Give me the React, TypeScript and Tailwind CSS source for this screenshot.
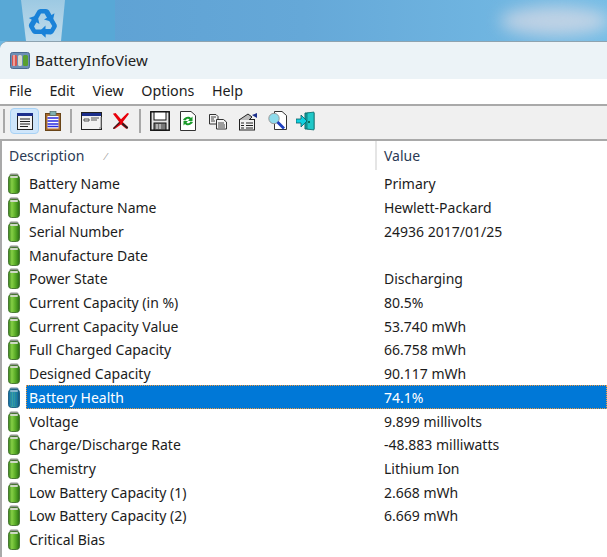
import React from "react";

function Battery({ selected }: { selected?: boolean }) {
  const id = selected ? "bs" : "bn";
  return (
    <svg width="12" height="21" viewBox="0 0 12 21" className="shrink-0">
      <defs>
        <linearGradient id={id} x1="0" x2="1" y1="0" y2="0">
          <stop offset="0" stopColor={selected ? "#16628a" : "#35801a"} />
          <stop offset="0.3" stopColor={selected ? "#3da5a0" : "#86cf45"} />
          <stop offset="0.65" stopColor={selected ? "#2a8f9a" : "#55a824"} />
          <stop offset="1" stopColor={selected ? "#124f78" : "#2a6d14"} />
        </linearGradient>
      </defs>
      <rect x="1.5" y="0.5" width="9" height="4" rx="1.5" fill={selected ? "#5f8aa5" : "#8f958c"} />
      <rect x="0.5" y="2.5" width="11" height="18" rx="3" fill={`url(#${id})`} stroke={selected ? "#175a80" : "#3f6f2a"} strokeWidth="0.9" />
      <rect x="2" y="3" width="8" height="2" rx="1" fill={selected ? "#86b4cc" : "#cfd8c6"} />
      {selected &&
        [6, 8, 10, 12, 14, 16, 18].map((y) => (
          <line key={y} x1="1" x2="11" y1={y} y2={y} stroke="#0b6fc8" strokeWidth="0.8" strokeDasharray="1 1" />
        ))}
    </svg>
  );
}

const ARM = "M11 20 L16.500 10.500 Q17.500 9 19.500 9 H25 Q27 9 28 10.500 L30.500 15 L33.500 13.300 L31.500 22 L23 19.500 L26 17.800 L23.500 13.500 H20 L15.500 21.500 Z";

function RecycleBin() {
  return (
    <svg width="46" height="41" viewBox="0 0 46 41">
      <defs>
        <linearGradient id="binFill" x1="0" x2="0" y1="0" y2="1">
          <stop offset="0" stopColor="#a9cfe5" />
          <stop offset="1" stopColor="#d3e5ef" />
        </linearGradient>
      </defs>
      <path d="M0 0H44L40 41H5Z" fill="url(#binFill)" opacity="0.85" />
      <g fill="#1a82d8">
        <path d={ARM} />
        <path d={ARM} transform="rotate(120 22 23)" />
        <path d={ARM} transform="rotate(240 22 23)" />
      </g>
    </svg>
  );
}

function AppIcon() {
  return (
    <svg width="20" height="18" viewBox="0 0 20 18">
      <rect x="0.5" y="0.5" width="19" height="16" rx="2" fill="#6d8fb5" stroke="#4a6a8f" />
      <rect x="2" y="3" width="5" height="11" rx="1.5" fill="#d8554f" />
      <rect x="3" y="3" width="2" height="11" fill="#eca09a" />
      <rect x="8" y="3" width="4" height="11" rx="1.5" fill="#d8d8cc" />
      <rect x="13" y="3" width="5" height="11" rx="1.5" fill="#58a030" />
    </svg>
  );
}

const I = ({ children }: { children: React.ReactNode }) => (
  <svg width="20" height="20" viewBox="0 0 20 20" className="shrink-0">
    {children}
  </svg>
);

const Doc1 = () => (
  <svg width="16" height="17" viewBox="0 0 16 17" className="shrink-0">
    <rect x="0.5" y="0.5" width="15" height="16" fill="#f3f3f3" stroke="#222" />
    <rect x="0" y="0" width="16" height="3" fill="#1c2f8c" />
    <path d="M3 6h10M3 8.500h10M3 11h10M3 13.500h8" stroke="#222" strokeWidth="1.2" />
  </svg>
);
const Clip = () => (
  <svg width="16" height="20" viewBox="0 0 16 20" className="shrink-0">
    <rect x="0.5" y="2.5" width="15" height="17" fill="#a8682c" stroke="#6a4518" />
    <rect x="2.500" y="5" width="11" height="12.500" fill="#fff" />
    <path d="M2.500 7h11M2.500 10h11M2.500 13h11M2.500 15.500h11" stroke="#2a2adf" strokeWidth="1.6" />
    <rect x="5" y="0.5" width="6" height="4" fill="#7fb0b0" stroke="#4a6a6a" strokeWidth="0.7" />
  </svg>
);
const Win = () => (
  <svg width="21" height="18" viewBox="0 0 21 18" className="shrink-0">
    <rect x="0.5" y="0.5" width="20" height="17" fill="#f2f2f2" stroke="#222" />
    <rect x="1" y="1" width="19" height="3" fill="#1c2f8c" />
    <path d="M3 7h5v2H3zM10 6h8M10 8h6" stroke="#555" strokeWidth="1" fill="none" />
    <path d="M18 16h2V5" stroke="#888" fill="none" />
  </svg>
);
const XIcon = () => (
  <svg width="18" height="18" viewBox="0 0 20 20" className="shrink-0">
    <path d="M1 2l3-1 6 7 7-7 2 1-7 9 6 6-2 2-6-5-7 5-2-1 7-7z" fill="#e8000b" />
    <path d="M1 18l7-7 1 1-7 7z" fill="#222" />
    <path d="M12 12l6 5-1 2-6-5z" fill="#222" />
  </svg>
);
const Save = () => (
  <I>
    <rect x="0.8" y="0.8" width="18.400" height="18.400" fill="#e6e6e6" stroke="#111" strokeWidth="1.500" />
    <rect x="4" y="1" width="12" height="8" fill="#fff" stroke="#111" />
    <rect x="4" y="12" width="12" height="7" fill="#777" stroke="#111" />
    <path d="M7 13v5M10 13v5" stroke="#eee" />
  </I>
);
const Refresh = () => (
  <svg width="16" height="20" viewBox="0 0 16 20" className="shrink-0">
    <path d="M0.500 0.500H11L15.500 4.500V19.500H0.500Z" fill="#fff" stroke="#333" />
    <path d="M3 9c1-3 6-4.500 8-2l1.500-1.500V10H8l1.500-1.500c-1-1.500-3-1-4 1z" fill="#1a9a2a" />
    <path d="M13 11c-1 3-6 4.500-8 2l-1.500 1.500V10H8l-1.500 1.500c1 1.500 3 1 4-1z" fill="#1a9a2a" />
  </svg>
);
const Copy = () => (
  <I>
    <path d="M1.500 3.500H8L10 5.500V13H1.500Z" fill="#f5f5f5" stroke="#333" />
    <path d="M8.500 8.500H15.500L18.500 11V18H8.500Z" fill="#f5f5f5" stroke="#333" />
    <path d="M3 6h5M3 8h3M3 10h4M10 12h6M10 14h7M10 16h7" stroke="#444" />
  </I>
);
const Props = () => (
  <I>
    <rect x="1.500" y="8.500" width="15" height="10.500" fill="#f2f2f2" stroke="#222" />
    <path d="M1 9l9-6 4 3-3 3" fill="#bbb" stroke="#222" />
    <path d="M3 12h3M8 12h7M3 14.500h3M8 14.500h7M3 17h3M8 17h7" stroke="#222" />
    <path d="M14 4l5-2v5z" fill="#1c2f8c" />
  </I>
);
const Find = () => (
  <svg width="19" height="20" viewBox="0 0 19 20" className="shrink-0">
    <path d="M6.500 0.500H14L18.500 4.500V18.500H6.500Z" fill="#fff" stroke="#333" />
    <circle cx="6" cy="7.500" r="5.200" fill="#8fdcec" stroke="#999" />
    <path d="M9.500 11L16 17.500" stroke="#1c3fc0" strokeWidth="2.800" />
  </svg>
);
const Exit = () => (
  <I>
    <path d="M9 2h9v16h-9z" fill="#14a6a6" stroke="#0a6a6a" />
    <path d="M11 2l7-1v18l-7-1z" fill="#20c8c8" stroke="#0a6a6a" strokeWidth="0.7" />
    <circle cx="13" cy="11" r="1" fill="#053" />
    <path d="M0 8h5V4l6 6-6 6v-4H0z" fill="#0fd0e0" stroke="#0a5a60" strokeWidth="0.8" />
  </I>
);

const Sep = () => <div className="w-[2px] h-[24px] bg-[#a8a8a8] shrink-0" />;

const rows: [string, string][] = [
  ["Battery Name", "Primary"],
  ["Manufacture Name", "Hewlett-Packard"],
  ["Serial Number", "24936 2017/01/25"],
  ["Manufacture Date", ""],
  ["Power State", "Discharging"],
  ["Current Capacity (in %)", "80.5%"],
  ["Current Capacity Value", "53.740 mWh"],
  ["Full Charged Capacity", "66.758 mWh"],
  ["Designed Capacity", "90.117 mWh"],
  ["Battery Health", "74.1%"],
  ["Voltage", "9.899 millivolts"],
  ["Charge/Discharge Rate", "-48.883 milliwatts"],
  ["Chemistry", "Lithium Ion"],
  ["Low Battery Capacity (1)", "2.668 mWh"],
  ["Low Battery Capacity (2)", "6.669 mWh"],
  ["Critical Bias", ""],
];

export default function App() {
  return (
    <div className="w-[607px] h-[557px] overflow-hidden flex flex-col bg-[#6fb8e2] text-[14px] text-[#1c1c1c] font-['Noto_Sans','Open_Sans',sans-serif]">
      <div className="h-[41px] shrink-0 flex bg-gradient-to-r from-[#5c9fd2] via-[#65a8d8] to-[#76bde6] overflow-hidden relative">
        <div className="w-[115px] h-full pl-[21px] bg-[#58a8d6] shrink-0">
          <RecycleBin />
        </div>
        <div className="absolute left-[500px] top-[6px] w-[110px] h-[30px] rounded-[50%] bg-[#f2e2e6]/60 blur-[8px]" />
      </div>
      <div className="flex-1 min-h-0 flex flex-col rounded-tl-[8px] overflow-hidden bg-white border-t border-[#8ea3b0]">
        <div className="h-[37px] shrink-0 bg-[#ecf3f7] flex items-center pl-[10px] gap-[5px]">
          <AppIcon />
          <span className="text-[15px] text-[#222]">BatteryInfoView</span>
        </div>
        <div className="h-[25px] shrink-0 bg-white flex items-center pl-[9px] pb-[2px] gap-[17.5px] text-[14.3px]">
          <span>File</span>
          <span>Edit</span>
          <span>View</span>
          <span>Options</span>
          <span>Help</span>
        </div>
        <div className="h-[37px] shrink-0 bg-[#f0f0f0] border-t-2 border-b-2 border-[#a9a9a9] flex items-center pl-[3px] pb-[3px]">
          <Sep />
          <div className="ml-[5px] w-[29px] h-[26px] rounded-[4px] bg-[#cfe6fb] border border-[#a8d2f5] flex items-center justify-center">
            <Doc1 />
          </div>
          <div className="ml-[6px]"><Clip /></div>
          <div className="ml-[9px]"><Sep /></div>
          <div className="ml-[9px]"><Win /></div>
          <div className="ml-[10px]"><XIcon /></div>
          <div className="ml-[9px]"><Sep /></div>
          <div className="ml-[9px]"><Save /></div>
          <div className="ml-[10px]"><Refresh /></div>
          <div className="ml-[12px]"><Copy /></div>
          <div className="ml-[10px]"><Props /></div>
          <div className="ml-[10px]"><Find /></div>
          <div className="ml-[9px]"><Exit /></div>
        </div>
        <div className="flex-1 min-h-0 border-l-2 border-[#a9a9a9] bg-white pl-[1px]">
          <div className="h-[31px] flex items-start">
            <div className="w-[374px] h-[29px] pl-[6px] flex items-center border-r-2 border-[#e5e5e5]">
              <span className="text-[#2b3a55]">Description</span>
              <span className="ml-[21px] mt-[2px] text-[9px] text-[#999] italic">⁄</span>
            </div>
            <div className="h-[29px] flex items-center pl-[7px]">
              <span className="text-[#2b3a55]">Value</span>
            </div>
          </div>
          {rows.map(([a, b]) => {
            const sel = a === "Battery Health";
            return (
              <div key={a} className="h-[23.73px] flex items-center">
                <div className="w-[23px] pl-[5px] shrink-0"><Battery selected={sel} /></div>
                <div className={`flex-1 flex items-center h-full ${sel ? "bg-[#0078d7] text-white outline-1 -outline-offset-1 outline-dotted outline-[#f09a40]" : ""}`}>
                  <span className="w-[358px] pl-[3px] shrink-0">{a}</span>
                  <span>{b}</span>
                </div>
              </div>
            );
          })}
        </div>
      </div>
    </div>
  );
}
